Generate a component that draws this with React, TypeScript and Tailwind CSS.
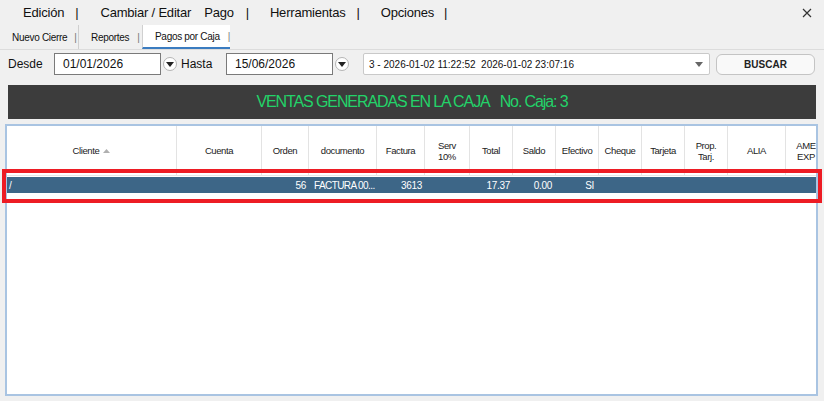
import React from 'react'

const cols = [
  { label: 'Cliente', w: 170, sort: true },
  { label: 'Cuenta', w: 85 },
  { label: 'Orden', w: 47 },
  { label: 'documento', w: 68 },
  { label: 'Factura', w: 48 },
  { label: 'Serv\n10%', w: 45 },
  { label: 'Total', w: 43 },
  { label: 'Saldo', w: 43 },
  { label: 'Efectivo', w: 43 },
  { label: 'Cheque', w: 43 },
  { label: 'Tarjeta', w: 43 },
  { label: 'Prop.\nTarj.', w: 43 },
  { label: 'ALIA', w: 58 },
  { label: 'AME\nEXP', w: 40 },
]

function DropButton() {
  return (
    <div className="w-[14px] h-[14px] rounded-full border border-[#b5b5b5] bg-white flex items-center justify-center">
      <svg width="8" height="5" viewBox="0 0 8 5">
        <path d="M0 0 L8 0 L4 5 Z" fill="#222" />
      </svg>
    </div>
  )
}

export default function App() {
  return (
    <div className="relative w-[824px] h-[401px] overflow-hidden bg-[#f0f0f0] text-[#111] font-['Liberation_Sans',Arial,sans-serif]">
      {/* menu */}
      <div className="h-[25px] flex items-center pl-[23px] text-[13px] tracking-[-0.2px] whitespace-nowrap">
        <span>Edición</span>
        <span className="ml-[11px]">|</span>
        <span className="ml-[22px]">Cambiar / Editar</span>
        <span className="ml-[13px]">Pago</span>
        <span className="ml-[12px]">|</span>
        <span className="ml-[21px]">Herramientas</span>
        <span className="ml-[11px]">|</span>
        <span className="ml-[21px]">Opciones</span>
        <span className="ml-[10px]">|</span>
        <svg className="ml-auto mr-[12px]" width="10" height="10" viewBox="0 0 10 10">
          <path d="M1 1 L9 9 M9 1 L1 9" stroke="#333" strokeWidth="1.2" />
        </svg>
      </div>

      {/* tabs */}
      <div className="h-[25px] flex items-stretch text-[10px] tracking-[-0.3px] whitespace-nowrap border-b border-[#dcdcdc]">
        <div className="shrink-0 flex items-center pl-[12px] w-[79px] border-r border-[#cfcfcf]">
          Nuevo Cierre <span className="ml-[7px] text-[#777]">|</span>
        </div>
        <div className="shrink-0 flex items-center pl-[12px] w-[63px]">
          Reportes <span className="ml-[8px] text-[#777]">|</span>
        </div>
        <div className="shrink-0 flex items-center pl-[12px] w-[88px] bg-white border-l border-[#d0d0d0] border-b-2 border-b-[#3b7cc0]">
          Pagos por Caja <span className="ml-[8px] text-[#777]">|</span>
        </div>
      </div>

      {/* filters */}
      <div className="mt-[3px] h-[22px] flex items-center text-[12px] whitespace-nowrap">
        <span className="shrink-0 ml-[8px] w-[46px]">Desde</span>
        <div className="shrink-0 w-[107px] h-[22px] border border-[#7a7a7a] bg-white flex items-center pl-[8px]">01/01/2026</div>
        <div className="ml-[2px]"><DropButton /></div>
        <span className="shrink-0 ml-[4px] w-[45px]">Hasta</span>
        <div className="shrink-0 w-[107px] h-[22px] border border-[#7a7a7a] bg-white flex items-center pl-[8px]">15/06/2026</div>
        <div className="ml-[2px]"><DropButton /></div>
        <div className="shrink-0 ml-[14px] w-[347px] h-[22px] border border-[#c9c9c9] rounded-[2px] bg-white flex items-center pl-[5px] pr-[6px] text-[10px]">
          <span>3 - 2026-01-02 11:22:52&nbsp; 2026-01-02 23:07:16</span>
          <svg className="ml-auto" width="8" height="5" viewBox="0 0 8 5">
            <path d="M0 0 L8 0 L4 5 Z" fill="#666" />
          </svg>
        </div>
        <div className="shrink-0 ml-[6px] w-[99px] h-[21px] border border-[#c4c4c4] rounded-[6px] bg-[#f9f9f9] flex items-center justify-center text-[10px] font-semibold text-[#222]">
          BUSCAR
        </div>
      </div>

      {/* banner */}
      <div className="mt-[10px] mx-[8px] h-[34px] bg-[#3c3c3c] flex items-center justify-center text-[16px] text-[#23d369] tracking-[-1.1px] whitespace-nowrap">
        VENTAS GENERADAS EN LA CAJA&nbsp;&nbsp; No. Caja: 3
      </div>

      {/* grid */}
      <div className="mt-[5px] ml-[5px] w-[813px] h-[272px] border-2 border-[#a9c4e2] bg-white overflow-hidden">
        <div className="flex h-[50px] border-b border-[#e6e6e6] text-[9.5px] text-[#222] tracking-[-0.4px]">
          {cols.map((c, i) => (
            <div
              key={i}
              className={`shrink-0 flex items-center justify-center text-center whitespace-pre leading-[11px] ${i < cols.length - 1 ? 'border-r border-[#e3e3e3]' : ''}`}
              style={{ width: c.w }}
            >
              {c.label}
              {c.sort && (
                <svg className="ml-[4px]" width="7" height="4" viewBox="0 0 7 4">
                  <path d="M0 4 L7 4 L3.5 0 Z" fill="#b0b0b0" />
                </svg>
              )}
            </div>
          ))}
        </div>
        <div className="mt-[1px] flex h-[16px] bg-[#3d6687] text-white text-[10px] tracking-[-0.3px] items-center whitespace-nowrap">
          <div className="w-[170px] shrink-0 pl-[2px]">/</div>
          <div className="w-[85px] shrink-0" />
          <div className="w-[47px] shrink-0 text-right pr-[3px]">56</div>
          <div className="w-[68px] shrink-0 pl-[5px] tracking-[-0.6px]">FACTURA 00...</div>
          <div className="w-[48px] shrink-0 text-right pr-[3px]">3613</div>
          <div className="w-[45px] shrink-0" />
          <div className="w-[43px] shrink-0 text-right pr-[3px]">17.37</div>
          <div className="w-[43px] shrink-0 text-right pr-[4px]">0.00</div>
          <div className="w-[43px] shrink-0 text-right pr-[5px]">SI</div>
        </div>
      </div>

      {/* highlight annotation */}
      <div className="absolute left-[2px] top-[169px] w-[820px] h-[34px] border-[4px] border-[#ed1c24] pointer-events-none" />
    </div>
  )
}
